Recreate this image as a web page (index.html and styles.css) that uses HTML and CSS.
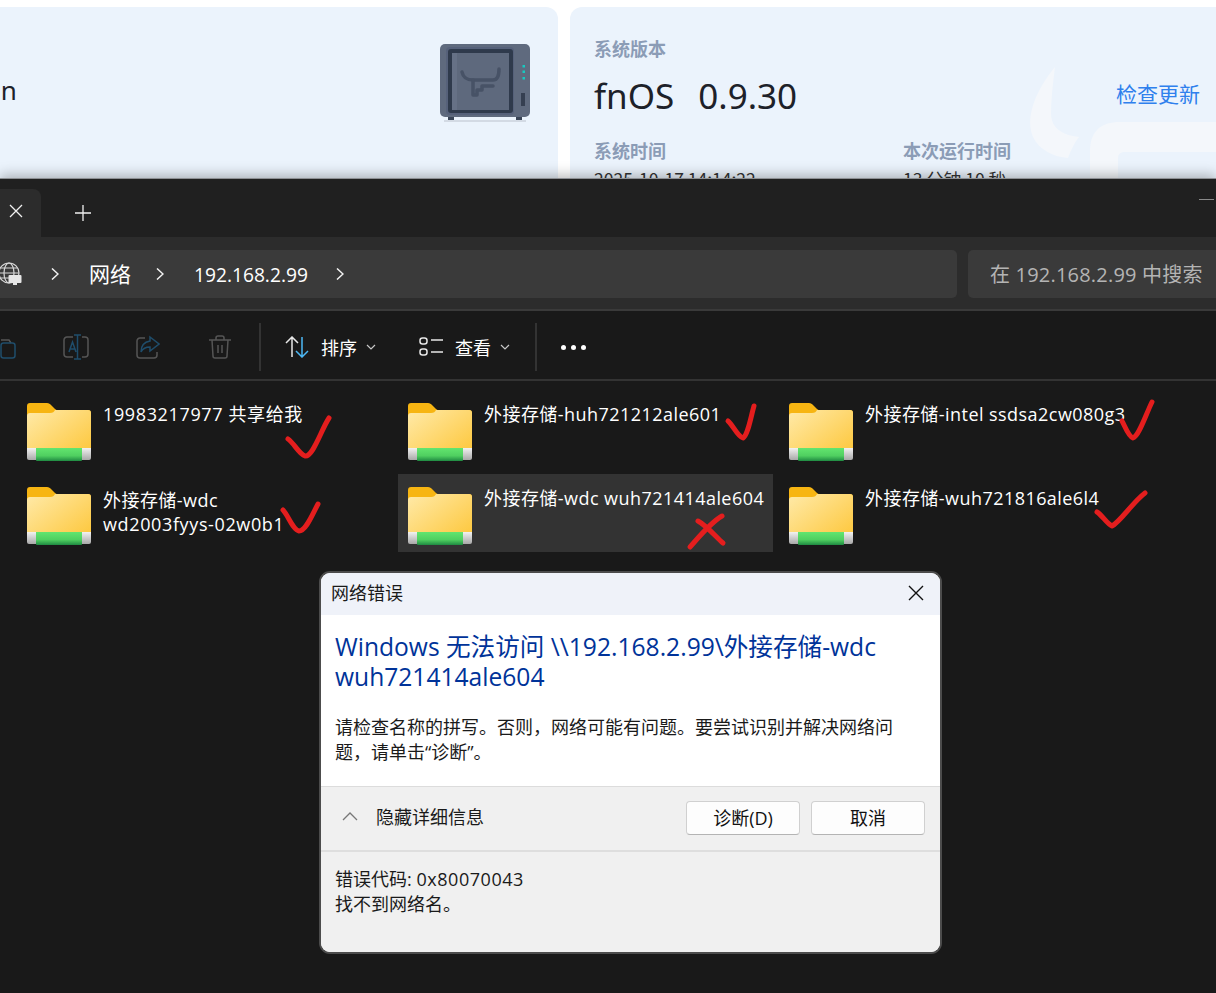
FILE: index.html
```html
<!DOCTYPE html>
<html lang="zh-CN">
<head>
<meta charset="utf-8">
<title>网络错误</title>
<link rel="stylesheet" href="styles.css">
</head>
<body>
<svg class="defs" width="0" height="0" aria-hidden="true">
  <defs>
    <linearGradient id="fbody" x1="0" y1="0" x2="1" y2="1">
      <stop offset="0" stop-color="#ffeaa9"/><stop offset="1" stop-color="#fdc535"/>
    </linearGradient>
    <linearGradient id="fgreen" x1="0" y1="0" x2="0" y2="1">
      <stop offset="0" stop-color="#63e56f"/><stop offset=".6" stop-color="#4fcf60"/><stop offset="1" stop-color="#1f8a42"/>
    </linearGradient>
    <linearGradient id="fbase" x1="0" y1="0" x2="0" y2="1">
      <stop offset="0" stop-color="#f2f2f2"/><stop offset="1" stop-color="#a8a8a8"/>
    </linearGradient>
    <symbol id="folder" viewBox="0 0 64 60">
      <path d="M0 4a3 3 0 0 1 3-3h17c2 0 3 1 4 2l4 4c1 1 2 1 3 1h30a3 3 0 0 1 3 3v6H0z" fill="#f7b512"/>
      <path d="M0 14a3 3 0 0 1 3-3h20c3 0 4-1 5-3h33a3 3 0 0 1 3 3v45H0z" fill="url(#fbody)"/>
      <path d="M0 46h64v10a2 2 0 0 1-2 2H2a2 2 0 0 1-2-2z" fill="url(#fbase)"/>
      <path d="M9 46h46v12a1 1 0 0 1-1 1H10a1 1 0 0 1-1-1z" fill="url(#fgreen)"/>
    </symbol>
  </defs>
</svg>

<div class="page">
  <div class="dash">
    <section class="card card-left">
      <span class="user-name">in</span>
      <svg class="nas" viewBox="0 0 92 80" width="92" height="80" aria-hidden="true">
        <rect x="1" y="0" width="90" height="73" rx="5" fill="#5f6a7e"/>
        <rect x="7" y="3" width="68" height="68" rx="4" fill="#56617a"/>
        <rect x="9" y="5" width="65" height="64" rx="3" fill="#2f3a4c"/>
        <rect x="13" y="9" width="57" height="57" fill="#5e697d"/>
        <rect x="13" y="9" width="5" height="57" fill="#667186"/>
        <g fill="none" stroke="#475266" stroke-width="3.500" stroke-linecap="round" stroke-linejoin="round">
          <path d="M34 36c-6 0-10-3-11-8M34 36h20c4 0 6-3 6-11"/>
          <path d="M34 36v15h4v-5h5v-4h11"/>
        </g>
        <rect x="83.500" y="21" width="2.500" height="2.500" fill="#18c8c0"/>
        <rect x="83.500" y="26.500" width="2.500" height="2.500" fill="#18c8c0"/>
        <rect x="83.500" y="33" width="2.500" height="2.500" fill="#18c8c0"/>
        <rect x="82" y="49" width="4" height="13" fill="#353f51"/>
        <rect x="9" y="73" width="6" height="3" fill="#3a4557"/>
        <rect x="77" y="73" width="6" height="3" fill="#3a4557"/>
        <rect x="5" y="76" width="82" height="2" fill="#d3dae4"/>
      </svg>
    </section>
    <section class="card card-right">
      <svg class="watermark" viewBox="0 0 190 130" width="190" height="130" aria-hidden="true">
        <path d="M25 0C8 20-6 50 3 70c6 13 21 20 35 21 3-8 7-16 11-21-16-2-28-8-28-24 0-14 2-30 4-46z" fill="#f4f7fb"/>
        <path d="M60 130V85c0-22 12-30 30-30h100v30H95c-5 0-7 2-7 7v38z" fill="#f4f7fb"/>
      </svg>
      <div class="info-label">系统版本</div>
      <div class="version-row">
        <div class="version"><span>fnOS</span><span>0.9.30</span></div>
        <a class="check-link">检查更新</a>
      </div>
      <div class="meta">
        <div>
          <div class="info-label">系统时间</div>
          <div class="meta-value">2025-10-17 14:14:22</div>
        </div>
        <div>
          <div class="info-label">本次运行时间</div>
          <div class="meta-value">13 分钟 10 秒</div>
        </div>
      </div>
    </section>
  </div>

  <div class="explorer">
    <div class="tabbar">
      <div class="tab">
        <svg class="tab-close" viewBox="0 0 14 14" width="14" height="14" aria-hidden="true"><path d="M1 1l12 12M13 1L1 13"/></svg>
      </div>
      <svg class="tab-new" viewBox="0 0 16 16" width="16" height="16" aria-hidden="true"><path d="M8 0v16M0 8h16"/></svg>
      <div class="minimize"></div>
    </div>

    <div class="addressrow">
      <div class="address">
        <svg class="globe" viewBox="0 0 24 24" width="24" height="24" aria-hidden="true">
          <g fill="none" stroke="#d8d8d8" stroke-width="1.2"><circle cx="11" cy="11" r="10"/><ellipse cx="11" cy="11" rx="5" ry="10"/><path d="M1 11h20M2.5 6h17M2.5 16h17"/></g>
          <rect x="10.5" y="13" width="13" height="8" rx="1" fill="#e6e6e6"/><rect x="15" y="21" width="4" height="2" fill="#e6e6e6"/>
        </svg>
        <svg class="crumb-sep" viewBox="0 0 8 12" width="8" height="12" aria-hidden="true"><path d="M1 .5l6 5.500-6 5.500"/></svg>
        <span class="crumb crumb-cjk">网络</span>
        <svg class="crumb-sep" viewBox="0 0 8 12" width="8" height="12" aria-hidden="true"><path d="M1 .5l6 5.500-6 5.500"/></svg>
        <span class="crumb crumb-ip">192.168.2.99</span>
        <svg class="crumb-sep" viewBox="0 0 8 12" width="8" height="12" aria-hidden="true"><path d="M1 .5l6 5.500-6 5.500"/></svg>
      </div>
      <div class="search">在 192.168.2.99 中搜索</div>
    </div>

    <div class="toolbar">
      <svg class="tool tool-copy" viewBox="0 0 24 24" width="24" height="24" aria-hidden="true">
        <path d="M1 5h8l2 3" fill="none" stroke="#555" stroke-width="1.5"/><rect x="1" y="8" width="14" height="15" rx="2.5" fill="none" stroke="#1f4d6b" stroke-width="1.5"/>
      </svg>
      <svg class="tool tool-rename" viewBox="0 0 26 26" width="26" height="26" aria-hidden="true">
        <path d="M10 3H4a3 3 0 0 0-3 3v14a3 3 0 0 0 3 3h6M19 3h3a3 3 0 0 1 3 3v14a3 3 0 0 1-3 3h-3" fill="none" stroke="#555" stroke-width="1.5"/>
        <path d="M14.500 1v24M11 1h7M11 25h7M6 18l3.500-10L13 18M7.200 15h5" fill="none" stroke="#1f4d6b" stroke-width="1.5"/>
      </svg>
      <svg class="tool tool-share" viewBox="0 0 24 24" width="24" height="24" aria-hidden="true">
        <path d="M9 3H4a3 3 0 0 0-3 3v14a3 3 0 0 0 3 3h14a3 3 0 0 0 3-3v-3" fill="none" stroke="#555" stroke-width="1.500"/>
        <path d="M14 2l9 7-9 7v-4c-4 0-7 1-9 5 0-6 3-10 9-11z" fill="none" stroke="#1f4d6b" stroke-width="1.500"/>
      </svg>
      <svg class="tool tool-trash" viewBox="0 0 22 24" width="22" height="24" aria-hidden="true">
        <path d="M0 5h22M7 5V3a2 2 0 0 1 2-2h4a2 2 0 0 1 2 2v2M3 5l1 16a2 2 0 0 0 2 2h10a2 2 0 0 0 2-2l1-16M9 10v8M13 10v8" fill="none" stroke="#555" stroke-width="1.500"/>
      </svg>
      <div class="tool-sep"></div>
      <svg class="tool-sort" viewBox="0 0 24 22" width="24" height="22" aria-hidden="true">
        <path d="M7 21V1M1 7l6-6 6 6" fill="none" stroke="#e8e8e8" stroke-width="1.500"/>
        <path d="M17 1v20M11 15l6 6 6-6" fill="none" stroke="#4cb8f5" stroke-width="1.500"/>
      </svg>
      <span class="tool-label">排序</span>
      <svg class="tool-caret" viewBox="0 0 10 6" width="10" height="6" aria-hidden="true"><path d="M1 1l4 4 4-4"/></svg>
      <svg class="tool-view" viewBox="0 0 24 20" width="24" height="20" aria-hidden="true">
        <g fill="none" stroke="#e8e8e8" stroke-width="1.500"><rect x="1" y="1" width="7" height="6" rx="2.500"/><rect x="1" y="12" width="7" height="6" rx="2.500"/><path d="M12 3h12M12 15h12"/></g>
      </svg>
      <span class="tool-label">查看</span>
      <svg class="tool-caret" viewBox="0 0 10 6" width="10" height="6" aria-hidden="true"><path d="M1 1l4 4 4-4"/></svg>
      <div class="tool-sep tool-sep-2"></div>
      <div class="tool-more"><i></i><i></i><i></i></div>
    </div>

    <div class="files">
      <div class="file"><svg class="folder" width="64" height="60" aria-hidden="true"><use href="#folder"/></svg><span class="file-name file-name-wide">19983217977 共享给我</span></div>
      <div class="file"><svg class="folder" width="64" height="60" aria-hidden="true"><use href="#folder"/></svg><span class="file-name">外接存储-huh721212ale601</span></div>
      <div class="file"><svg class="folder" width="64" height="60" aria-hidden="true"><use href="#folder"/></svg><span class="file-name">外接存储-intel ssdsa2cw080g3</span></div>
      <div class="file"><svg class="folder" width="64" height="60" aria-hidden="true"><use href="#folder"/></svg><span class="file-name file-name-two">外接存储-wdc<br><span class="file-name-wide">wd2003fyys-02w0b1</span></span></div>
      <div class="file file-selected"><svg class="folder" width="64" height="60" aria-hidden="true"><use href="#folder"/></svg><span class="file-name">外接存储-wdc wuh721414ale604</span></div>
      <div class="file"><svg class="folder" width="64" height="60" aria-hidden="true"><use href="#folder"/></svg><span class="file-name">外接存储-wuh721816ale6l4</span></div>
    </div>
  </div>

  <div class="dialog">
    <div class="dlg-title">
      <span>网络错误</span>
      <svg class="dlg-close" viewBox="0 0 16 16" width="16" height="16" aria-hidden="true"><path d="M1 1l14 14M15 1L1 15"/></svg>
    </div>
    <div class="dlg-body">
      <h1 class="dlg-heading">Windows 无法访问 \\192.168.2.99\外接存储-wdc<br>wuh721414ale604</h1>
      <p class="dlg-text">请检查名称的拼写。否则，网络可能有问题。要尝试识别并解决网络问<br>题，请单击“诊断”。</p>
    </div>
    <div class="dlg-actions">
      <svg class="dlg-chevron" viewBox="0 0 16 9" width="16" height="9" aria-hidden="true"><path d="M1 8l7-7 7 7"/></svg>
      <span class="dlg-toggle">隐藏详细信息</span>
      <button class="dlg-btn">诊断(D)</button>
      <button class="dlg-btn">取消</button>
    </div>
    <div class="dlg-details">错误代码: <span class="dlg-code">0x80070043</span><br>找不到网络名。</div>
  </div>

  <svg class="marks" viewBox="0 0 1216 993" width="1216" height="993" aria-hidden="true">
    <path d="M288 439c6 4 11 15 17 17 8 1 16-26 24-38"/>
    <path d="M283 510c5 5 10 20 16 21 7 0 13-16 19-27"/>
    <path d="M728 421c5 4 9 15 15 17 5-3 8-22 11-32"/>
    <path d="M1122 421c3 5 6 15 11 17 6-2 13-24 19-36"/>
    <path d="M1097 512c5 3 10 12 15 14 8-4 21-24 33-33"/>
    <path d="M690 547c9-10 20-24 32-31"/>
    <path d="M698 521c9 5 18 16 25 22"/>
  </svg>
</div>
</body>
</html>
```

FILE: styles.css
```css
* { box-sizing: border-box; }
html, body { margin: 0; padding: 0; background: #fff; }
body { font-family: "Open Sans", "Noto Sans CJK SC", sans-serif; }
.defs { position: absolute; }
.page { position: relative; width: 1216px; height: 993px; overflow: hidden; }

/* dashboard behind */
.dash { display: flex; gap: 12px; height: 178px; padding-top: 7px; margin-left: -40px; width: 1296px; overflow: hidden; }
.card { position: relative; height: 320px; background: #ebf3fc; border-radius: 12px; }
.card-left { width: 598px; display: flex; align-items: flex-start; justify-content: space-between; padding: 37px 27px 0 34px; }
.user-name { font: 26px/1 "Noto Sans", sans-serif; color: #1d2129; margin-top: 33px; }
.nas { display: block; }
.card-right { width: 686px; padding: 29px 0 0 24px; }
.watermark { position: absolute; left: 460px; top: 60px; }
.info-label { position: relative; font: 700 18px/24px "Noto Sans CJK SC", sans-serif; color: #8b9cb6; }
.version-row { position: relative; display: flex; align-items: center; justify-content: space-between; width: 606px; height: 48px; margin-top: 12px; }
.version { display: flex; gap: 24px; font: 35px/48px "Noto Sans", sans-serif; color: #1d2129; }
.check-link { font: 21px/28px "Noto Sans CJK SC", sans-serif; color: #2f80ed; margin-top: -6px; }
.meta { position: relative; display: grid; grid-template-columns: 309px 300px; margin-top: 18px; }
.meta-value { font: 17.500px/24px "Noto Sans CJK SC", sans-serif; color: #333; margin-top: 5px; }

/* explorer */
.explorer { position: relative; height: 815px; background: #191919; border-top: 1px solid #8d8f93; box-shadow: 0 -3px 12px rgba(0, 0, 0, .28); display: flex; flex-direction: column; }
.tabbar { display: flex; align-items: flex-end; height: 58px; background: #202020; position: relative; flex: none; }
.tab { width: 41px; height: 48px; background: #2c2c2c; border-radius: 0 8px 0 0; display: flex; align-items: center; justify-content: flex-end; padding: 0 18px 2px 0; }
.tab-close { flex: none; fill: none; stroke: #f0f0f0; stroke-width: 1.300; margin-bottom: 2px; }
.tab-new { fill: none; stroke: #f0f0f0; stroke-width: 1.300; margin: 0 0 16px 34px; }
.minimize { position: absolute; right: 2px; top: 20px; width: 15px; height: 1px; background: #8a8a8a; }

.addressrow { display: flex; gap: 11px; height: 74px; padding: 13px 0 11px; background: #2c2c2c; border-bottom: 2px solid #3a3a3a; flex: none; }
.address { width: 957px; height: 48px; background: #3a3a3a; border-radius: 0 5px 5px 0; display: flex; align-items: center; color: #fff; }
.globe { margin-left: -2px; flex: none; }
.crumb-sep { flex: none; fill: none; stroke: #f2f2f2; stroke-width: 1.500; margin-left: 29px; }
.crumb { margin-left: 30px; }
.crumb + .crumb-sep { margin-left: 25px; }
.crumb-cjk { font: 21px/1 "Noto Sans CJK SC", sans-serif; margin-top: -2px; }
.crumb-ip { font-size: 19.200px; margin-right: 3px; }
.search { flex: 1; height: 48px; background: #3a3a3a; border-radius: 5px 0 0 5px; color: #b4b4b4; font-size: 20px; line-height: 50px; letter-spacing: .2px; padding-left: 22px; white-space: nowrap; }

.toolbar { display: flex; align-items: center; height: 70px; border-bottom: 2px solid #333; flex: none; background: #191919; color: #fff; padding-top: 4px; }
.tool { flex: none; }
.tool-copy { margin-left: 0; }
.tool-rename { margin-left: 39px; }
.tool-share { margin-left: 47px; }
.tool-trash { margin-left: 49px; }
.tool-sep { width: 2px; height: 48px; background: #333; margin-left: 28px; flex: none; }
.tool-sep-2 { margin-left: 25px; }
.tool-sort { margin-left: 24px; flex: none; }
.tool-label { font: 18px/24px "Noto Sans CJK SC", sans-serif; margin-left: 12px; width: 36px; flex: none; }
.tool-caret { fill: none; stroke: #c8c8c8; stroke-width: 1.200; margin-left: 9px; flex: none; }
.tool-view { margin-left: 43px; flex: none; }
.tool-more { display: flex; gap: 5px; margin-left: 24px; }
.tool-more i { width: 5px; height: 5px; border-radius: 50%; background: #fff; }

.files { display: grid; grid-template-columns: repeat(3, 375px); gap: 6px; padding: 9px 0 0 17px; grid-auto-rows: 78px; }
.file { display: flex; align-items: flex-start; padding: 12px 0 0 10px; color: #fff; }
.file-selected { background: #333; }
.folder { flex: none; display: block; }
.file-name { margin-left: 12px; font-size: 18px; line-height: 25px; letter-spacing: .45px; white-space: nowrap; }
.file-name-wide { letter-spacing: .63px; }
.file-name-two { margin-top: 2px; line-height: 24px; }

/* dialog */
.dialog { position: absolute; left: 319px; top: 571px; width: 623px; height: 383px; border: 2px solid #4c4c4c; border-radius: 11px; background: #fff; overflow: hidden; display: flex; flex-direction: column; }
.dlg-title { display: flex; align-items: center; justify-content: space-between; height: 42px; background: #eff2f9; padding: 0 16px 5px 10px; font: 18px/24px "Noto Sans CJK SC", sans-serif; color: #1a1a1a; flex: none; }
.dlg-close { fill: none; stroke: #111; stroke-width: 1.400; margin-top: 2px; }
.dlg-body { height: 171px; padding: 17px 14px 0; flex: none; }
.dlg-heading { margin: 0; font: 400 24.600px/30px "Open Sans", "Noto Sans CJK SC", sans-serif; color: #003399; white-space: nowrap; }
.dlg-text { margin: 23px 0 0; font: 18px/25px "Open Sans", "Noto Sans CJK SC", sans-serif; color: #1a1a1a; white-space: nowrap; }
.dlg-actions { display: flex; align-items: center; height: 66px; background: #f0f0f0; border-top: 1px solid #dcdcdc; border-bottom: 2px solid #dedede; padding: 0 15px 2px 21px; flex: none; }
.dlg-chevron { fill: none; stroke: #777; stroke-width: 1.300; flex: none; margin-top: -2px; }
.dlg-toggle { margin-left: 18px; font: 18px/24px "Noto Sans CJK SC", sans-serif; color: #1a1a1a; margin-top: -4px; margin-right: auto; }
.dlg-btn { width: 114px; height: 34px; margin-left: 11px; background: #fdfdfd; border: 1px solid #d0d0d0; border-bottom-color: #b4b4b4; border-radius: 4px; font: 18px/24px "Open Sans", "Noto Sans CJK SC", sans-serif; color: #111; padding: 0; }
.dlg-details { flex: 1; background: #f0f0f0; padding: 15px 14px 0; font: 18px/25px "Open Sans", "Noto Sans CJK SC", sans-serif; color: #1a1a1a; }
.dlg-code { letter-spacing: .55px; }

/* hand-drawn annotations over the screenshot */
.marks { position: absolute; left: 0; top: 0; fill: none; stroke: #e41e1e; stroke-width: 5; stroke-linecap: round; stroke-linejoin: round; pointer-events: none; }
```
